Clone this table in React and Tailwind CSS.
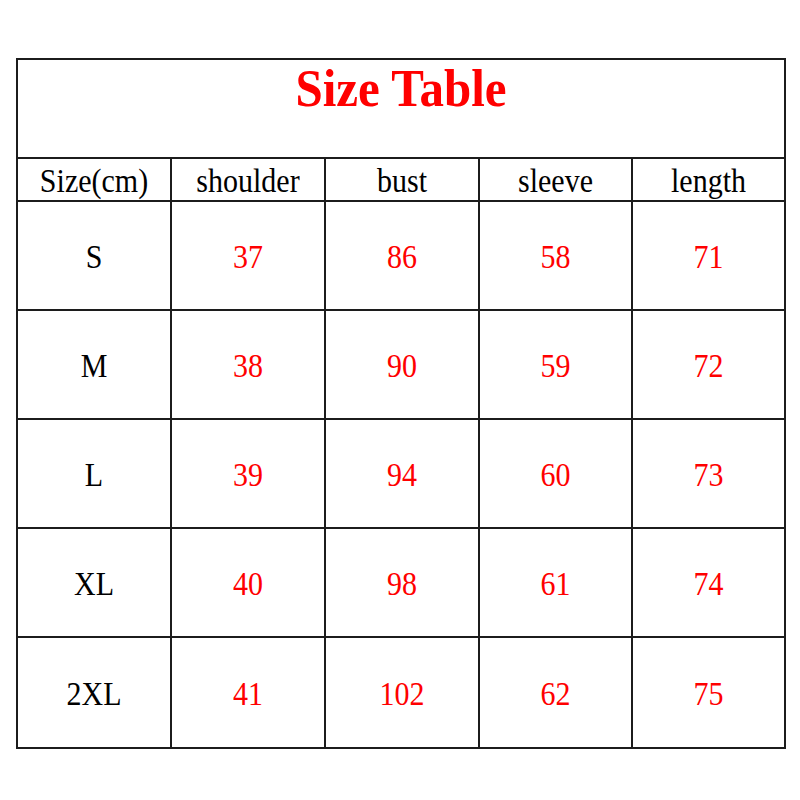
import React from 'react';

const cols = ['Size(cm)', 'shoulder', 'bust', 'sleeve', 'length'];

const rows = [
  ['S', '37', '86', '58', '71'],
  ['M', '38', '90', '59', '72'],
  ['L', '39', '94', '60', '73'],
  ['XL', '40', '98', '61', '74'],
  ['2XL', '41', '102', '62', '75'],
];

const widths = ['w-[154px]', 'w-[154px]', 'w-[154px]', 'w-[153px]', 'w-[151px]'];

const App = () => {
  return (
    <div
      className="w-[800px] h-[800px] bg-white pt-[58px] pl-[16px]"
      style={{ fontFamily: '"Liberation Serif", "Times New Roman", serif' }}
    >
      <div className="w-[770px] border-2 border-[#1c1c1c]">
        <div className="h-[99px] border-b-2 border-[#1c1c1c] flex justify-center pt-[5px]">
          <h1 className="text-[49px] leading-none font-bold text-[#ff0000] scale-y-[1.08]">Size Table</h1>
        </div>
        <div className="flex h-[43px] border-b-2 border-[#1c1c1c]">
          {cols.map((c, i) => (
            <div
              key={c}
              className={`${widths[i]} flex items-center justify-center text-[30px] text-black ${i < 4 ? 'border-r-2 border-[#1c1c1c]' : ''}`}
            >
              <span className="leading-none scale-y-[1.15]">{c}</span>
            </div>
          ))}
        </div>
        {rows.map((r, ri) => (
          <div
            key={r[0]}
            className={`flex ${ri < 4 ? 'h-[109px] border-b-2 border-[#1c1c1c]' : 'h-[109px]'}`}
          >
            {r.map((v, i) => (
              <div
                key={i}
                className={`${widths[i]} flex items-center justify-center text-[30px] ${i === 0 ? 'text-black' : 'text-[#ff0000]'} ${i < 4 ? 'border-r-2 border-[#1c1c1c]' : ''}`}
              >
                <span className="leading-none scale-y-[1.15]">{v}</span>
              </div>
            ))}
          </div>
        ))}
      </div>
    </div>
  );
};

export default App;
